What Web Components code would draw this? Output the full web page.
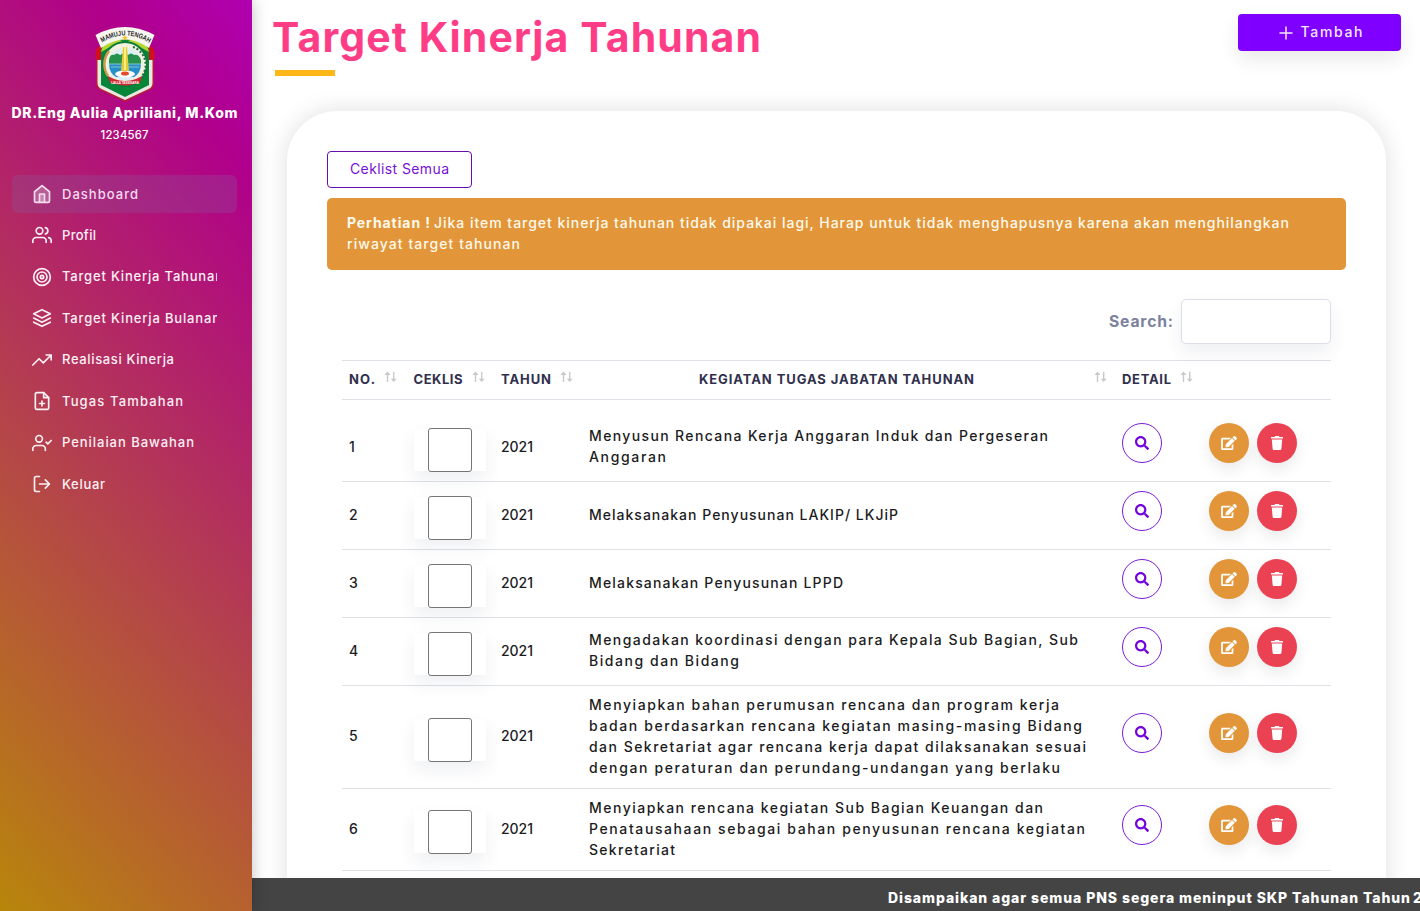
<!DOCTYPE html>
<html lang="id">
<head>
<meta charset="utf-8">
<title>Target Kinerja Tahunan</title>
<style>
html,body{margin:0;height:100%;overflow:hidden;background:#fff}
body{font-family:Inter,"Open Sans",sans-serif;font-size:14px;line-height:21px;color:#1c1c1e}
</style>
</head>
<body>
<skp-app></skp-app>
<script>
const mount = (el, html) => { el.attachShadow({mode:'open'}).innerHTML = html; };

/* Icon set: outline icons on a 24 grid, solid icons on a 512 grid */
const ICONS = {
  home:'<path d="M3 9.3 12 2l9 7.3V20a2 2 0 0 1-2 2H5a2 2 0 0 1-2-2z"/><path d="M9 22V12h6v10"/>',
  users:'<path d="M17 21v-2a4 4 0 0 0-4-4H5a4 4 0 0 0-4 4v2"/><circle cx="9" cy="7" r="4"/><path d="M23 21v-2a4 4 0 0 0-3-3.87M16 3.13a4 4 0 0 1 0 7.75"/>',
  target:'<circle cx="12" cy="12" r="10"/><circle cx="12" cy="12" r="6"/><circle cx="12" cy="12" r="2"/>',
  layers:'<path d="M12 2 2 7l10 5 10-5zM2 17l10 5 10-5M2 12l10 5 10-5"/>',
  trend:'<path d="M23 6 13.5 15.5l-5-5L1 18M17 6h6v6"/>',
  file:'<path d="M14 2H6a2 2 0 0 0-2 2v16a2 2 0 0 0 2 2h12a2 2 0 0 0 2-2V8z"/><path d="M14 2v6h6M12 18v-6M9 15h6"/>',
  check:'<path d="M16 21v-2a4 4 0 0 0-4-4H5a4 4 0 0 0-4 4v2"/><circle cx="8.5" cy="7" r="4"/><path d="m17 11 2 2 4-4"/>',
  logout:'<path d="M9 21H5a2 2 0 0 1-2-2V5a2 2 0 0 1 2-2h4M16 17l5-5-5-5M21 12H9"/>',
  plus:'<path d="M12 4v16M4 12h16"/>'
};
const SOLID = {
  edit:['0 0 576 512','M402.6 83.2l90.2 90.2c3.8 3.8 3.8 10 0 13.8L274.4 405.6l-92.8 10.3c-12.4 1.4-22.9-9.1-21.5-21.5l10.3-92.8L388.8 83.2c3.8-3.8 10-3.8 13.8 0zm162-22.9l-48.8-48.8c-15.2-15.2-39.9-15.2-55.2 0l-35.4 35.4c-3.8 3.8-3.8 10 0 13.8l90.2 90.2c3.8 3.8 10 3.8 13.8 0l35.4-35.4c15.2-15.3 15.2-40 0-55.2zM384 346.2V448H64V128h229.8c3.2 0 6.2-1.3 8.5-3.5l40-40c7.6-7.6 2.2-20.5-8.5-20.5H48C21.5 64 0 85.5 0 112v352c0 26.5 21.5 48 48 48h352c26.5 0 48-21.5 48-48V306.2c0-10.7-12.9-16-20.5-8.5l-40 40c-2.2 2.3-3.5 5.3-3.5 8.5z'],
  trash:['0 0 448 512','M150 4h148l14 32h120q12 0 12 14v44H4V50q0-14 12-14h120zM34 128h380l-30 350q-3 30-32 30H96q-29 0-32-30z'],
  search:['0 0 512 512','M505 442.7L405.3 343c-4.5-4.5-10.6-7-17-7H372c27.6-35.3 44-79.7 44-128C416 93.1 322.9 0 208 0S0 93.1 0 208s93.1 208 208 208c48.3 0 92.7-16.4 128-44v16.3c0 6.4 2.5 12.5 7 17l99.7 99.7c9.4 9.4 24.6 9.4 33.9 0l28.3-28.3c9.4-9.4 9.4-24.6.1-34zM208 336c-70.7 0-128-57.2-128-128 0-70.7 57.2-128 128-128 70.7 0 128 57.2 128 128 0 70.7-57.2 128-128 128z']
};
customElements.define('skp-icon', class extends HTMLElement {
  connectedCallback(){
    if (this.shadowRoot) return;
    const n = this.getAttribute('name');
    mount(this, `<style>:host{display:block;width:20px;height:20px;flex:none}svg{display:block;width:100%;height:100%}.tint{fill:rgba(255,255,255,.22)}</style>` +
      (SOLID[n] ? `<svg viewBox="${SOLID[n][0]}" fill="currentColor"><path d="${SOLID[n][1]}"/></svg>`
      : `<svg viewBox="0 0 24 24" ${n === 'home' ? 'class="tint"' : 'fill="none"'} stroke="currentColor" stroke-width="2" stroke-linecap="round" stroke-linejoin="round">${ICONS[n]}</svg>`));
  }
});

customElements.define('skp-crest', class extends HTMLElement {
  connectedCallback(){
    mount(this, `<style>:host{display:block;width:60px;height:75px}svg{display:block}</style>
<svg width="60" height="75" viewBox="0 0 60 75">
<path d="M1 32h58v25q0 4-4 6L30 75 5 63q-4-2-4-6z" fill="#b81c3a"/>
<path d="M2.5 33h55v23q0 4-4 6L30 73 6.500 62q-4-2-4-6z" fill="#e9e8e3"/>
<path d="M5 19Q0 20 .5 32H8V19zM55 19q5 1 4.500 13H52V19z" fill="#d50f17"/>
<path d="M6 22 12 11h36l6 11v36L30 70 6 58z" fill="#078639"/>
<path d="M6 25Q9 12 20 12q7 0 10 6 3-6 10-6 11 0 14 13l-9-5H15z" fill="#b5d631"/>
<g transform="translate(0 -4)">
<circle cx="30" cy="41" r="23" fill="#087b3a"/>
<circle cx="30" cy="41" r="21" fill="#f3f0df"/>
<path d="M14 28A21 21 0 0 0 13 53" fill="none" stroke="#c99b4a" stroke-width="2.5"/>
<path d="M38 24A19 19 0 0 1 47 53" fill="none" stroke="#216b45" stroke-width="2" stroke-dasharray="2 2"/>
<circle cx="30" cy="41" r="16.500" fill="#dceff5"/>
<path d="M14 40h32q0 10-7 14H21q-7-4-7-14z" fill="#268ec8"/>
<path d="M14 37q1-6 5-5 3-3 6 0 4-3 8 0 3-3 6 0 5-1 7 5v4H14z" fill="#26924b"/>
<path d="M14 41h32M16 44h28" stroke="#83c5c9"/>
<ellipse cx="30" cy="51" rx="10" ry="3.500" fill="#fff"/><ellipse cx="30" cy="50.500" rx="4" ry="2" fill="#e44b27"/>
<path d="m28 24h4l2 24h-8z" fill="#e5cb39"/><path d="M29 24h2v23h-2z" fill="#fff07a"/>
<path d="m13 53 6 3q11 4 22 0l6-3-2 7-6 1q-9 3-18 0l-6-1z" fill="#d32931"/>
<text x="30" y="60.500" text-anchor="middle" font-family="Liberation Sans" font-weight="700" font-size="3" fill="#fff">LALLA TASSISARA</text>
</g>
<path d="M.5 8Q30-8 59.500 8L54 21Q30 4 6 21z" fill="#f7f6ef"/>
<path id="arc" d="M7 15.500Q30 1.500 53.500 15.500" fill="none"/>
<text font-family="Liberation Sans" font-weight="700" font-size="7" fill="#29272b"><textPath href="#arc" textLength="50" lengthAdjust="spacingAndGlyphs">MAMUJU TENGAH</textPath></text>
<path d="m30 8 1 2h2l-1.600 1.400.6 2.100-2-1.200-2 1.200.6-2.100L27 10h2z" fill="#f5c72c"/>
</svg>`);
  }
});

customElements.define('nav-item', class extends HTMLElement {
  connectedCallback(){
    mount(this, `<style>
:host{display:flex;align-items:center;height:38px;margin-bottom:3.45px;padding:0 20px;gap:10px;border-radius:6px;color:#fdf0f5;font-size:13px;font-weight:500}
:host([active]){background:rgba(134,92,159,.28);color:#f4dcee}
div{overflow:hidden;white-space:nowrap;flex:1}
</style><skp-icon name="${this.getAttribute('icon')}"></skp-icon><div><slot></slot></div>`);
  }
});

customElements.define('skp-sidebar', class extends HTMLElement {
  connectedCallback(){
    const items = [['home','Dashboard',76],['users','Profil',34],['target','Target Kinerja Tahunan',161],['layers','Target Kinerja Bulanan',158],['trend','Realisasi Kinerja',112],['file','Tugas Tambahan',121],['check','Penilaian Bawahan',132],['logout','Keluar',43]];
    mount(this, `<style>
:host{display:block;box-sizing:border-box;width:252px;height:911px;background:linear-gradient(48deg,#b8860b 0%,#b0008b 85%,#b000b0 100%);box-shadow:0 0 15px rgba(0,0,0,.25);position:relative;z-index:2;color:#fff}
header{display:flex;flex-direction:column;align-items:center;height:175px;box-sizing:border-box;padding:27px 3px 0 0}
.name{font-weight:800;font-size:14px;margin-top:1px;--dy:-1px}
.nip{font-size:11.3px;font-weight:500;margin-top:1px}
nav{margin:0 15px 0 12px}
</style><header><skp-crest></skp-crest>
<div class="name"><fit-text w="226">DR.Eng Aulia Apriliani, M.Kom</fit-text></div>
<div class="nip"><fit-text w="48">1234567</fit-text></div></header>
<nav>${items.map((i,k)=>`<nav-item icon="${i[0]}"${k?'':' active'}><fit-text w="${i[2]}">${i[1]}</fit-text></nav-item>`).join('')}</nav>`);
  }
});

customElements.define('skp-button', class extends HTMLElement {
  connectedCallback(){
    mount(this, `<style>
:host{display:flex;align-items:center;justify-content:center;box-sizing:border-box;height:37px;border-radius:4px;font-weight:500;--dy:-1px}
:host([kind=primary]){width:163px;background:#8000ff;color:#f7e8ff;gap:6px;box-shadow:0 8px 20px rgba(0,0,0,.09)}
:host([kind=outline]){width:145px;border:1px solid #6a0dad;color:#7812d4;font-weight:400;background:#fff}
</style><slot></slot>`);
  }
});

customElements.define('round-button', class extends HTMLElement {
  connectedCallback(){
    mount(this, `<style>
:host{display:flex;align-items:center;justify-content:center;box-sizing:border-box;width:40px;height:40px;border-radius:50%;color:#fff;box-shadow:0 6px 16px rgba(0,0,0,.09)}
:host([kind=search]){border:1px solid #7c1bd6;color:#7205db;box-shadow:none}
:host([kind=edit]){background:#e29639}
:host([kind=trash]){background:#ea4252}
skp-icon{width:14px;height:14px}
:host([kind=edit]) skp-icon{width:16px;height:14px}
</style><skp-icon name="${this.getAttribute('kind')}"></skp-icon>`);
  }
});

customElements.define('sort-arrows', class extends HTMLElement {
  connectedCallback(){
    mount(this, `<style>:host{display:block;width:13px;height:12px}svg{display:block}</style>
<svg width="13" height="12" viewBox="0 0 13 12" fill="#c9c9cb"><path d="M2.800 11V4H.5l3-3.500 3 3.500H4.200v7zM9 .8v7H6.700l3 3.200 3-3.200h-2.300v-7z"/></svg>`);
  }
});

customElements.define('task-row', class extends HTMLElement {
  connectedCallback(){
    mount(this, `<style>
:host{display:grid;box-sizing:border-box;grid-template-columns:64.5px 87.5px 88px 533px 87px 1fr;align-items:center;padding:0 0 1px 7px;border-bottom:1px solid #dee2e6;font-weight:450;--dy:-1px}
.field{width:72px;height:42px;margin-top:6px;margin-left:.5px;display:flex;align-items:center;justify-content:center;background:#fff;box-shadow:0 8px 18px rgba(40,50,90,.08)}
.box{box-sizing:border-box;width:44px;height:44px;flex:none;border:1px solid #767676;border-radius:3px;background:#fff}
.act{display:flex;gap:8px;margin-bottom:8px}
</style><fit-text w="8">${this.getAttribute('no')}</fit-text>
<div class="field"><div class="box"></div></div>
<fit-text w="32">2021</fit-text>
<div><slot></slot></div>
<div class="act"><round-button kind="search"></round-button></div>
<div class="act"><round-button kind="edit"></round-button><round-button kind="trash"></round-button></div>`);
  }
});

customElements.define('task-table', class extends HTMLElement {
  connectedCallback(){
    const rows = [
      [82,[['Menyusun Rencana Kerja Anggaran Induk dan Pergeseran',459],['Anggaran',77]]],
      [68,[['Melaksanakan Penyusunan LAKIP/ LKJiP',309]]],
      [68,[['Melaksanakan Penyusunan LPPD',254]]],
      [68,[['Mengadakan koordinasi dengan para Kepala Sub Bagian, Sub',489],['Bidang dan Bidang',150]]],
      [103,[['Menyiapkan bahan perumusan rencana dan program kerja',470],['badan berdasarkan rencana kegiatan masing-masing Bidang',493],['dan Sekretariat agar rencana kerja dapat dilaksanakan sesuai',497],['dengan peraturan dan perundang-undangan yang berlaku',471]]],
      [82,[['Menyiapkan rencana kegiatan Sub Bagian Keuangan dan',454],['Penatausahaan sebagai bahan penyusunan rencana kegiatan',496],['Sekretariat',86]]]
    ];
    mount(this, `<style>
:host{display:block;margin:0 15px}
.search{display:flex;justify-content:flex-end;align-items:center;gap:8px;font-size:15.7px;font-weight:700;color:#7c829e}
.input{box-sizing:border-box;width:150px;height:45px;border:1px solid #dcdfe8;border-radius:5px;background:#fff;box-shadow:0 8px 18px rgba(40,50,90,.08)}
.head{display:grid;box-sizing:border-box;height:40px;margin-top:16px;grid-template-columns:64.5px 87.5px 88px 533px 1fr;padding:0 0 2px 7px;align-items:center;border:1px solid #dee2e6;border-width:1px 0;font-size:13px;font-weight:700;color:#30304d}
.h{display:flex;align-items:center;gap:9px}
.h sort-arrows{margin-top:-4px}
.wide{padding-right:15px}.wide fit-text{margin-left:110px}
.wide sort-arrows{margin-left:auto}
task-row:first-of-type{padding-top:14px}
</style>
<div class="search"><fit-text w="64">Search:</fit-text><div class="input"></div></div>
<div class="head">
<div class="h"><fit-text w="26">NO.</fit-text><sort-arrows></sort-arrows></div>
<div class="h"><fit-text w="49">CEKLIS</fit-text><sort-arrows></sort-arrows></div>
<div class="h"><fit-text w="50">TAHUN</fit-text><sort-arrows></sort-arrows></div>
<div class="h wide"><fit-text w="275">KEGIATAN TUGAS JABATAN TAHUNAN</fit-text><sort-arrows></sort-arrows></div>
<div class="h"><fit-text w="49">DETAIL</fit-text><sort-arrows></sort-arrows></div>
</div>
${rows.map((r,i)=>`<task-row no="${i+1}" style="height:${r[0]}px">${r[1].map(l=>`<fit-text w="${l[1]}">${l[0]}</fit-text>`).join('')}</task-row>`).join('')}`);
  }
});

customElements.define('skp-app', class extends HTMLElement {
  connectedCallback(){
    mount(this, `<style>
:host{display:flex;width:1420px;height:911px;overflow:hidden}
main{flex:1;min-width:0;display:flex;flex-direction:column}
.view{height:878px;overflow:hidden}
.top{height:111px;box-sizing:border-box;padding:14px 19px 0 21px;display:flex;justify-content:space-between;align-items:flex-start}
h1{margin:0;font-size:41px;line-height:48px;font-weight:700;color:#ff3d87;--dy:-1px}
h1 fit-text{margin-left:-1px}
.bar{width:60px;height:6px;background:#fdb719;margin:8px 0 0 2px}
.plus{width:18px;height:18px}
.card{box-sizing:border-box;height:1000px;margin:0 34px 0 35px;padding:40px;border-radius:50px;background:#fff;box-shadow:0 0 25px rgba(0,0,0,.13)}
.alert{box-sizing:border-box;height:72px;margin:10px 0 29px;padding:15px 20px;border-radius:5px;background:#e29639;color:#fff9ec;font-weight:500;--dy:-1px}
.line{display:flex;gap:4px}
b{font-weight:700}
footer{height:33px;box-sizing:border-box;background:#444;color:#fff;padding:10px 0 0 636px;font-weight:800;font-size:14px;overflow:hidden;white-space:nowrap;display:flex;gap:3px;position:relative;z-index:1;--dy:-1px}
</style>
<skp-sidebar></skp-sidebar>
<main><div class="view">
<div class="top"><div><h1><fit-text w="489">Target Kinerja Tahunan</fit-text></h1><div class="bar"></div></div>
<skp-button kind="primary"><skp-icon class="plus" name="plus"></skp-icon><fit-text w="62">Tambah</fit-text></skp-button></div>
<div class="card"><skp-button kind="outline"><fit-text w="99">Ceklist Semua</fit-text></skp-button>
<div class="alert"><div class="line"><b><fit-text w="83">Perhatian !</fit-text></b><fit-text w="855">Jika item target kinerja tahunan tidak dipakai lagi, Harap untuk tidak menghapusnya karena akan menghilangkan</fit-text></div><fit-text w="173">riwayat target tahunan</fit-text></div>
<task-table></task-table></div>
</div><footer><fit-text w="522">Disampaikan agar semua PNS segera meninput SKP Tahunan Tahun</fit-text><fit-text w="7">2</fit-text></footer></main>`);
  }
});

/* Tracks a single line of text out to the width given in "w" */
customElements.define('fit-text', class extends HTMLElement {
  connectedCallback(){
    mount(this, `<style>:host{display:block;white-space:nowrap;width:${this.getAttribute('w')}px}span{display:inline-block;transform:translateY(var(--dy,0))}</style><span><slot></slot></span>`);
    const s = this.shadowRoot.querySelector('span');
    const n = this.textContent.length;
    if (n > 1) s.style.letterSpacing = ((+this.getAttribute('w') - s.getBoundingClientRect().width) / (n - 1)).toFixed(3) + 'px';
  }
});
</script>
</body>
</html>
